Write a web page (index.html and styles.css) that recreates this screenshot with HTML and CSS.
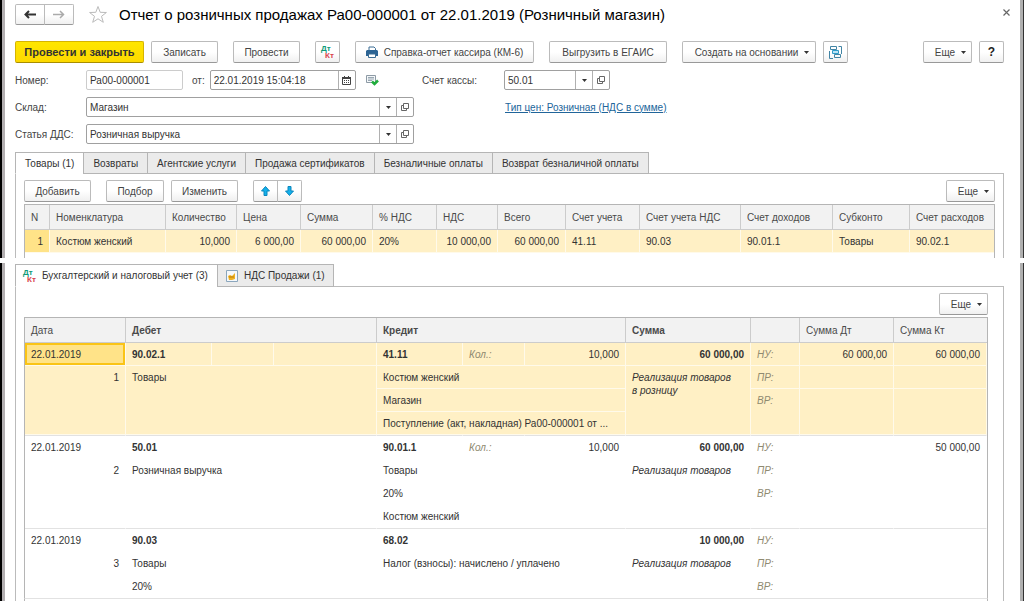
FILE: index.html
```html
<!DOCTYPE html>
<html lang="ru">
<head>
<meta charset="utf-8">
<title>Отчет о розничных продажах</title>
<link rel="stylesheet" href="styles.css">
</head>
<body>
<svg class="defs" aria-hidden="true">
  <symbol id="i-open" viewBox="0 0 10 10"><path d="M3.500 1.500h5v5h-5zM3.500 3.500h-2v5h5v-2" fill="none" stroke="#666"/></symbol>
  <symbol id="i-caret" viewBox="0 0 5 3"><path d="M0 0h5L2.500 3z" fill="#333"/></symbol>
</svg>
<section class="window window-top">
  <header class="titlebar">
    <div class="group">
      <button class="btn nav" aria-label="Назад"><svg width="12" height="9" viewBox="0 0 12 9"><path d="M1 4.500h11M5 1L1.500 4.500 5 8" fill="none" stroke="#333" stroke-width="2"/></svg></button>
      <button class="btn nav" aria-label="Вперед"><svg width="12" height="9" viewBox="0 0 12 9"><path d="M0 4.500h11M7 1l3.500 3.500L7 8" fill="none" stroke="#aaa" stroke-width="1.500"/></svg></button>
    </div>
    <button class="plain star" aria-label="Избранное"><svg width="20" height="19" viewBox="0 0 20 19"><path d="M10 1.500l2.200 5.800 6.200.2-4.900 3.800 1.800 6L10 13.800l-5.300 3.500 1.800-6L1.600 7.500l6.200-.2z" fill="#fff" stroke="#bbb"/></svg></button>
    <h1>Отчет о розничных продажах Ра00-000001 от 22.01.2019 (Розничный магазин)</h1>
    <button class="plain close" aria-label="Закрыть"><svg width="7" height="7" viewBox="0 0 7 7"><path d="M.5.5l6 6M6.500.5l-6 6" stroke="#666" stroke-width="1.200"/></svg></button>
  </header>

  <div class="toolbar">
    <button class="btn primary w-main">Провести и закрыть</button>
    <button class="btn w-s">Записать</button>
    <button class="btn w-s apart">Провести</button>
    <button class="btn square apart" aria-label="Дт Кт"><svg width="16" height="16"><text x="1" y="7" class="dt">Дт</text><text x="5" y="14" class="kt">Кт</text></svg></button>
    <button class="btn w-xl apart"><svg width="12" height="12" viewBox="0 0 12 12"><path d="M3 4V1h5l1.500 1.500V4" fill="#fff" stroke="#3b6c94"/><path d="M1 4h10l1 1v5h-2V8H2v2H0V5z" fill="#2c6494"/><path d="M2.500 8h7v3.500h-7z" fill="#fff" stroke="#3b6c94"/></svg>Справка-отчет кассира (КМ-6)</button>
    <button class="btn w-l apart">Выгрузить в ЕГАИС</button>
    <button class="btn w-create apart menu">Создать на основании<svg width="5" height="3"><use href="#i-caret"/></svg></button>
    <button class="btn square" aria-label="Структура подчиненности"><svg width="13" height="13" viewBox="0 0 13 13" fill="none" stroke="#4285a5"><path d="M1.500.5h6v3h-6zM5.500 8.500h6v3h-6z"/><path d="M3.500 4.500h6v3h-6z" fill="#bde4f5" stroke="#2e9bc8"/><path d="M9.500.5h3V8M.5 5v7.500H4"/></svg></button>
    <button class="btn w-more menu end">Еще<svg width="5" height="3"><use href="#i-caret"/></svg></button>
    <button class="btn square help">?</button>
  </div>

  <form class="form">
    <label for="num">Номер:</label>
    <div class="cell">
      <input class="field num" id="num" value="Ра00-000001">
      <label for="date">от:</label>
      <div class="combo date">
        <input id="date" value="22.01.2019 15:04:18">
        <button type="button" aria-label="Календарь"><svg width="9" height="9" viewBox="0 0 9 9"><path d="M.5 1.500h8v7h-8z" fill="#fff" stroke="#444"/><path d="M0 1h9v2H0zM2 0h1v1H2zM6 0h1v1H6z" fill="#444"/><path d="M2 4.500h5M2 6.500h5" stroke="#444" stroke-dasharray="1 1"/></svg></button>
      </div>
      <svg class="status" width="14" height="12" viewBox="0 0 14 12"><path d="M1.500 1.500h9v7h-9z" fill="#f4f7f9" stroke="#8d9aa5"/><path d="M3 3.500h6M3 5h6M3 6.500h4" stroke="#9aa8b3"/><path d="M7 7.500l2.500 2.500 3.500-3.500" fill="none" stroke="#20ac3c" stroke-width="2.500"/></svg>
    </div>
    <label for="acc">Счет кассы:</label>
    <div class="combo acc">
      <input id="acc" value="50.01">
      <button type="button" aria-label="Выбрать"><svg width="5" height="3"><use href="#i-caret"/></svg></button>
      <button type="button" aria-label="Открыть"><svg width="10" height="10"><use href="#i-open"/></svg></button>
    </div>

    <label for="store">Склад:</label>
    <div class="combo wide">
      <input id="store" value="Магазин">
      <button type="button" aria-label="Выбрать"><svg width="5" height="3"><use href="#i-caret"/></svg></button>
      <button type="button" aria-label="Открыть"><svg width="10" height="10"><use href="#i-open"/></svg></button>
    </div>
    <a class="price" href="#">Тип цен: Розничная (НДС в сумме)</a>

    <label for="dds">Статья ДДС:</label>
    <div class="combo wide">
      <input id="dds" value="Розничная выручка">
      <button type="button" aria-label="Выбрать"><svg width="5" height="3"><use href="#i-caret"/></svg></button>
      <button type="button" aria-label="Открыть"><svg width="10" height="10"><use href="#i-open"/></svg></button>
    </div>
  </form>

  <nav class="tabs">
    <button class="tab active">Товары (1)</button>
    <button class="tab">Возвраты</button>
    <button class="tab">Агентские услуги</button>
    <button class="tab">Продажа сертификатов</button>
    <button class="tab">Безналичные оплаты</button>
    <button class="tab">Возврат безналичной оплаты</button>
  </nav>
  <div class="panel">
    <div class="toolbar sub">
      <button class="btn w-s">Добавить</button>
      <button class="btn w-xs apart">Подбор</button>
      <button class="btn w-s">Изменить</button>
      <div class="group apart">
        <button class="btn square" aria-label="Вверх"><svg width="9" height="10" viewBox="0 0 9 10"><path d="M4.500.5l4 4.500H6v4.500H3V5H.5z" fill="#14b0ea" stroke="#0b86bd"/></svg></button>
        <button class="btn square" aria-label="Вниз"><svg width="9" height="10" viewBox="0 0 9 10"><path d="M4.500 9.500l4-4.500H6V.5H3V5H.5z" fill="#14b0ea" stroke="#0b86bd"/></svg></button>
      </div>
      <button class="btn w-more menu end">Еще<svg width="5" height="3"><use href="#i-caret"/></svg></button>
    </div>
    <table class="grid goods">
      <colgroup><col class="c25"><col class="c116"><col class="c71"><col class="c64"><col class="c72"><col class="c64"><col class="c61"><col class="c68"><col class="c74"><col class="c101"><col class="c92"><col class="c77"><col></colgroup>
      <thead><tr><th>N</th><th>Номенклатура</th><th>Количество</th><th>Цена</th><th>Сумма</th><th>% НДС</th><th>НДС</th><th>Всего</th><th>Счет учета</th><th>Счет учета НДС</th><th>Счет доходов</th><th>Субконто</th><th>Счет расходов</th></tr></thead>
      <tbody>
        <tr class="picked"><td class="r current">1</td><td>Костюм женский</td><td class="r">10,000</td><td class="r">6 000,00</td><td class="r">60 000,00</td><td>20%</td><td class="r">10 000,00</td><td class="r">60 000,00</td><td>41.11</td><td>90.03</td><td>90.01.1</td><td>Товары</td><td>90.02.1</td></tr>
      </tbody>
    </table>
    <div class="rest"></div>
  </div>
</section>

<section class="window window-bottom">
  <nav class="tabs">
    <button class="tab active iconed"><svg width="16" height="16"><text x="1" y="7" class="dt">Дт</text><text x="5" y="14" class="kt">Кт</text></svg>Бухгалтерский и налоговый учет (3)</button>
    <button class="tab iconed"><svg width="12" height="12" viewBox="0 0 12 12"><path d="M.5.5h11v11H.5z" fill="#f5f8fb" stroke="#8ba6bd"/><path d="M2 6l2-1 2 1 3-3v6l-3 1H3z" fill="#f0b222"/><path d="M3 7h5" stroke="#b97f0c"/></svg>НДС Продажи (1)</button>
  </nav>
  <div class="panel">
    <div class="toolbar sub">
      <button class="btn w-more menu end">Еще<svg width="5" height="3"><use href="#i-caret"/></svg></button>
    </div>
    <table class="grid entries">
      <colgroup><col class="c101"><col class="c86"><col class="c62"><col class="c103"><col class="c86"><col class="c62"><col class="c101"><col class="c125"><col class="c49"><col class="c94"><col></colgroup>
      <thead><tr><th>Дата</th><th colspan="3" class="b">Дебет</th><th colspan="3" class="b">Кредит</th><th class="b">Сумма</th><th></th><th>Сумма Дт</th><th>Сумма Кт</th></tr></thead>
      <tbody class="picked">
        <tr><td class="current framed">22.01.2019</td><td class="b">90.02.1</td><td></td><td></td><td class="b">41.11</td><td class="hint">Кол.:</td><td class="r">10,000</td><td class="r b">60 000,00</td><td class="hint">НУ:</td><td class="r">60 000,00</td><td class="r">60 000,00</td></tr>
        <tr><td class="r" rowspan="3">1</td><td colspan="3" rowspan="3">Товары</td><td colspan="3">Костюм женский</td><td class="i" rowspan="3">Реализация товаров<br>в розницу</td><td class="hint">ПР:</td><td></td><td></td></tr>
        <tr><td colspan="3">Магазин</td><td class="hint" rowspan="2">ВР:</td><td rowspan="2"></td><td rowspan="2"></td></tr>
        <tr><td colspan="3">Поступление (акт, накладная) Ра00-000001 от ...</td></tr>
      </tbody>
      <tbody>
        <tr><td>22.01.2019</td><td class="b" colspan="3">50.01</td><td class="b">90.01.1</td><td class="hint">Кол.:</td><td class="r">10,000</td><td class="r b">60 000,00</td><td class="hint">НУ:</td><td></td><td class="r">50 000,00</td></tr>
        <tr><td class="r" rowspan="3">2</td><td colspan="3" rowspan="3">Розничная выручка</td><td colspan="3">Товары</td><td class="i" rowspan="3">Реализация товаров</td><td class="hint">ПР:</td><td></td><td></td></tr>
        <tr><td colspan="3">20%</td><td class="hint" rowspan="2">ВР:</td><td rowspan="2"></td><td rowspan="2"></td></tr>
        <tr><td colspan="3">Костюм женский</td></tr>
      </tbody>
      <tbody>
        <tr><td>22.01.2019</td><td class="b" colspan="3">90.03</td><td class="b" colspan="3">68.02</td><td class="r b">10 000,00</td><td class="hint">НУ:</td><td></td><td></td></tr>
        <tr><td class="r" rowspan="2">3</td><td colspan="3">Товары</td><td colspan="3" rowspan="2">Налог (взносы): начислено / уплачено</td><td class="i" rowspan="2">Реализация товаров</td><td class="hint">ПР:</td><td></td><td></td></tr>
        <tr><td colspan="3">20%</td><td class="hint">ВР:</td><td></td><td></td></tr>
      </tbody>
    </table>
    <div class="rest lined"></div>
  </div>
</section>
</body>
</html>
```
FILE: styles.css
```css
* { box-sizing: border-box; }
body {
  margin: 0;
  height: 100vh;
  display: flex;
  flex-direction: column;
  gap: 5px;
  overflow: hidden;
  background: #fff;
  color: #444;
  font: 10px/13px "Liberation Sans", Arial, sans-serif;
}
button, input { font: inherit; color: inherit; margin: 0; }
button { cursor: pointer; }
svg { flex: none; display: block; }
.defs { position: absolute; width: 0; height: 0; }
.dt, .kt { font: bold 8px "Liberation Sans", Arial, sans-serif; }
.dt { fill: #109a78; }
.kt { fill: #d9434b; }

.window {
  display: flex;
  flex-direction: column;
  padding: 0 16px 0 10px;
  border: solid #b0b0b0;
  border-width: 0 4px 0 5px;
  border-image: linear-gradient(to right, #000 2px, #b3afb1 2px, #b0b0b0 calc(100% - 1px), #333 calc(100% - 1px)) 0 4 0 5;
}
.window-top { flex: none; }
.window-bottom { flex: 1; min-height: 0; padding-top: 1px; }

.titlebar { display: flex; align-items: center; padding-top: 4px; height: 25px; }
h1 { margin: 0 auto 0 11px; font-size: 15px; line-height: 20px; font-weight: normal; color: #000; white-space: nowrap; }
.plain { display: flex; padding: 0; border: 0; background: none; }
.star { margin-left: 14px; }
.close { margin: 0 -6px 5px 0; }
.group { display: flex; }
.group .btn:first-child { border-radius: 2px 0 0 2px; }
.group .btn + .btn { margin-left: -1px; border-radius: 0 2px 2px 0; }

.btn {
  display: flex;
  align-items: center;
  justify-content: center;
  gap: 6px;
  height: 22px;
  padding: 0;
  border: 1px solid #bbb;
  border-bottom-color: #999;
  border-radius: 2px;
  background: linear-gradient(#fff 50%, #f0f0f0);
  white-space: nowrap;
}
.nav { width: 30px; height: 21px; }
.primary { background: linear-gradient(#ffe600, #fdd900); border-color: #d6b400; border-bottom-color: #a98e00; color: #333; font-weight: bold; font-size: 11px; }
.menu { padding-left: 6px; }
.square { width: 25px; }
.help { color: #222; font-weight: bold; font-size: 12px; }
.w-xs { width: 58px; }
.w-s { width: 67px; }
.w-more { width: 49px; }
.w-main { width: 129px; }
.w-create { width: 134px; }
.w-l { width: 118px; }
.w-xl { width: 179px; }

.toolbar { display: flex; gap: 7px; padding-top: 16px; }
.apart { margin-left: 8px; }
.end { margin-left: auto; }
.sub { padding: 6px 0 2px; }

.form {
  display: grid;
  grid-template-columns: 71px 336px 82px 1fr;
  grid-auto-rows: 20px;
  row-gap: 7px;
  align-items: center;
  padding: 7px 0 8px;
}
.cell { display: flex; align-items: center; gap: 5px; }
.cell label { margin-left: 4px; }
.status { margin-left: 4px; }
.field, .combo { height: 20px; border: 1px solid #a0a0a0; border-radius: 2px; background: #fff; color: #333; }
.field { padding: 0 3px; }
.num { width: 97px; border-color: #ccc; }
.combo { display: flex; }
.combo input { flex: 1; min-width: 0; border: 0; padding: 0 3px; background: none; }
.combo button { display: flex; align-items: center; justify-content: center; width: 17px; padding: 0; border: 0; border-left: 1px solid #b0b0b0; background: none; }
.date { width: 146px; }
.acc { width: 106px; }
.wide { width: 328px; }
.price { grid-column: 4; padding-left: 1px; color: #21659a; }
.wide + label { grid-column: 1; }

.tabs { display: flex; margin-bottom: -1px; position: relative; }
.tab { display: flex; align-items: center; gap: 6px; height: 22px; padding: 0 9px; border: 1px solid #b5b5b5; background: #ebebeb; color: #333; white-space: nowrap; }
.tab + .tab { margin-left: -1px; }
.tab.active { background: #fff; border-bottom-color: #fff; }
.iconed { height: 23px; padding: 0 8px; }
.iconed.active { gap: 4px; padding: 0 9px 0 6px; }

.panel { display: flex; flex-direction: column; padding: 0 8px; border: solid #bbb; border-width: 1px 1px 0; }
.window-bottom .panel { flex: 1; padding-right: 15px; }
.rest { flex: 1; min-height: 5px; border: solid #b5b5b5; border-width: 0 1px; }
.lined { border-top: 1px solid #e2e2e2; }

.grid { width: 100%; table-layout: fixed; border-collapse: separate; border-spacing: 0; border: solid #b5b5b5; border-width: 1px 1px 0; color: #333; }
.grid th, .grid td { padding: 0 6px; text-align: left; white-space: nowrap; overflow: hidden; border: solid transparent; border-width: 0 1px 1px 0; }
.grid th { height: 25px; background: #f2f2f2; border-color: #ccc; font-weight: normal; color: #4a4a4a; }
.goods tr > :last-child, .entries th:last-child { border-right: 0; }
.goods td { height: 23px; }
.entries td { height: 23px; padding-top: 5px; vertical-align: top; }
.grid .picked td { background: #fff0c5; border-color: #fffaea; }
.grid .picked .current { background: #ffe388; }
.grid .picked .framed { box-shadow: inset 0 0 0 2px #fac416; }
.entries tbody + tbody tr:first-child td { height: 24px; border-top: 1px solid #e2e2e2; }
.grid .r { text-align: right; }
.grid .b { font-weight: bold; }
.grid .i { font-style: italic; }
.grid .hint { font-style: italic; color: #8f8a70; }

.c25 { width: 25px; } .c49 { width: 49px; } .c61 { width: 61px; } .c62 { width: 62px; }
.c64 { width: 64px; } .c68 { width: 68px; } .c71 { width: 71px; } .c72 { width: 72px; }
.c74 { width: 74px; } .c77 { width: 77px; } .c86 { width: 86px; } .c92 { width: 92px; }
.c94 { width: 94px; } .c101 { width: 101px; } .c103 { width: 103px; } .c116 { width: 116px; }
.c125 { width: 125px; }
```
